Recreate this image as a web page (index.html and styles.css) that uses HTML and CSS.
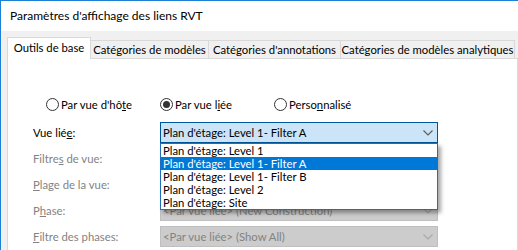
FILE: index.html
```html
<!DOCTYPE html>
<html lang="fr">
<head>
  <meta charset="UTF-8" />
  <title>Paramètres d'affichage des liens RVT</title>
  <link rel="stylesheet" href="styles.css">
</head>
<body>
  <div class="window">
    <div class="titlebar">Paramètres d'affichage des liens RVT</div>

    <div class="client">
      <div class="tabs">
        <div class="tab tab-base active">Outils de base</div>
        <div class="tab tab-models">Catégories de modèles</div>
        <div class="tab tab-annot">Catégories d'annotations</div>
        <div class="tab tab-analytic">Catégories de modèles analytiques</div>
      </div>

      <div class="panel">
        <div class="radios">
          <label class="radio"><span class="dot"></span><span>Par vue d'hô<u>t</u>e</span></label>
          <label class="radio checked"><span class="dot"></span><span>Par vue l<u>i</u>ée</span></label>
          <label class="radio"><span class="dot"></span><span>Perso<u>n</u>nalisé</span></label>
        </div>

        <div class="form">
          <div class="label"><span>Vue lié<u>e</u>:</span></div>
          <div class="combo open">
            <span>Plan d'étage: Level 1- Filter A</span>
            <svg class="chev" width="10" height="6" viewBox="0 0 10 6"><path d="M0.5 0.5 L5 5 L9.5 0.5" fill="none" stroke="#5a5a5a" stroke-width="1.1"/></svg>
            <ul class="list">
              <li>Plan d'étage: Level 1</li>
              <li class="selected">Plan d'étage: Level 1- Filter A</li>
              <li>Plan d'étage: Level 1- Filter B</li>
              <li>Plan d'étage: Level 2</li>
              <li>Plan d'étage: Site</li>
            </ul>
          </div>

          <div class="label disabled"><span>Filtre<u>s</u> de vue:</span></div>
          <div class="combo disabled"><span></span></div>

          <div class="label disabled"><span><u>P</u>lage de la vue:</span></div>
          <div class="combo disabled"><span></span></div>

          <div class="label disabled"><span>P<u>h</u>ase:</span></div>
          <div class="combo disabled">
            <span>&lt;Par vue liée&gt; (New Construction)</span>
            <svg class="chev" width="10" height="6" viewBox="0 0 10 6"><path d="M0.5 0.5 L5 5 L9.5 0.5" fill="none" stroke="#a8a8a8" stroke-width="1.1"/></svg>
          </div>

          <div class="label disabled"><span><u>F</u>iltre des phases:</span></div>
          <div class="combo disabled">
            <span>&lt;Par vue liée&gt; (Show All)</span>
            <svg class="chev" width="10" height="6" viewBox="0 0 10 6"><path d="M0.5 0.5 L5 5 L9.5 0.5" fill="none" stroke="#a8a8a8" stroke-width="1.1"/></svg>
          </div>
        </div>
      </div>
    </div>
  </div>
</body>
</html>
```

FILE: styles.css
```css
* {
  box-sizing: border-box;
}

body {
  margin: 0;
  font-family: Lato, "Liberation Sans", sans-serif;
  font-size: 11.3px;
  color: #000;
  background: #fff;
  overflow: hidden;
}

.window {
  height: 250px;
  border-top: 1px solid #1c80d6;
  border-left: 1px solid #1c80d6;
  background: #f0f0f0;
}

.titlebar {
  height: 30px;
  line-height: 30px;
  padding-left: 9px;
  font-size: 12px;
  background: #fff;
  color: #000;
}

.client {
  padding: 6px 0 0 6px;
}

/* tabs */
.tabs {
  display: flex;
  align-items: flex-end;
  height: 21px;
  position: relative;
  z-index: 2;
}

.tab {
  height: 18px;
  line-height: 17px;
  border: 1px solid #d9d9d9;
  border-bottom: none;
  margin-left: -1px;
  background: #f0f0f0;
  text-align: center;
  white-space: nowrap;
}

.tab.active {
  height: 22px;
  line-height: 20px;
  margin-left: 0;
  margin-bottom: -1px;
  background: #fff;
  position: relative;
  z-index: 1;
}

.tab-base { width: 84px; }
.tab-models { width: 119px; }
.tab-annot { width: 133px; }
.tab-analytic { width: 175px; }

.panel {
  background: #fff;
  border: 1px solid #d9d9d9;
  height: 200px;
  padding: 38px 0 0 38px;
}

/* radios */
.radios {
  display: grid;
  grid-template-columns: 114px 114px 114px;
  height: 14px;
  margin-bottom: 11px;
}

.radio {
  display: flex;
  align-items: center;
  gap: 2px;
}

.dot {
  width: 13px;
  height: 13px;
  border: 1px solid #333;
  border-radius: 50%;
  display: flex;
  align-items: center;
  justify-content: center;
}

.radio.checked .dot::after {
  content: "";
  width: 7px;
  height: 7px;
  border-radius: 50%;
  background: #333;
}

/* form */
.form {
  display: grid;
  grid-template-columns: 127px 278px;
  grid-auto-rows: 21px;
  row-gap: 5px;
  margin-left: -13px;
}

.label {
  display: flex;
  align-items: center;
}

.label.disabled {
  color: #838383;
}

.combo {
  position: relative;
  display: flex;
  align-items: center;
  justify-content: space-between;
  padding: 0 4px 0 2px;
  white-space: nowrap;
}

.combo.open {
  background: #cce4f7;
  border: 1px solid #005499;
}

.combo.disabled {
  background: #cccccc;
  border: 1px solid #bfbfbf;
  color: #838383;
}

.list {
  position: absolute;
  top: 20px;
  left: -1px;
  width: 278px;
  margin: 0;
  padding: 0;
  list-style: none;
  background: #fff;
  border: 1px solid #1f6fc0;
  box-shadow: 3px 3px 4px rgba(0, 0, 0, 0.35);
  z-index: 5;
}

.list li {
  height: 13px;
  line-height: 13px;
  padding-left: 2px;
  color: #000;
}

.list li.selected {
  background: #0078d7;
  color: #fff;
}
```
